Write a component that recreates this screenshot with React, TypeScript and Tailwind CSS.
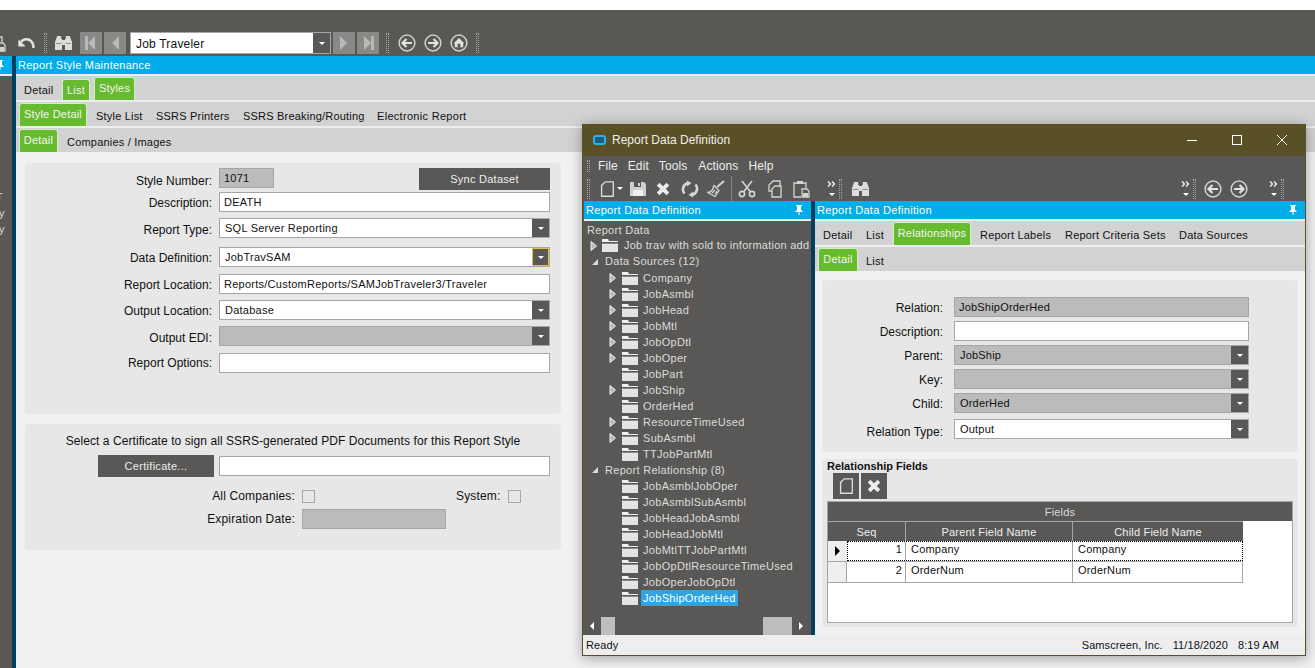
import type { ReactNode } from 'react';

function Tab({ label, active, className = '' }: { label: string; active?: boolean; className?: string }) {
  if (active) {
    return (
      <div className={`flex items-start justify-center whitespace-nowrap rounded-t-[3px] border border-b-0 border-[#d5edc3] bg-[#66bb2f] pt-[2px] text-[#f4f4f4] ${className}`}>
        {label}
      </div>
    );
  }
  return <div className={`whitespace-nowrap pb-[2px] text-[#111] ${className}`}>{label}</div>;
}

function Caret({ className = '' }: { className?: string }) {
  return <div className={`h-0 w-0 border-x-[3px] border-t-[3px] border-x-transparent border-t-white ${className}`} />;
}

function Grip({ className = '' }: { className?: string }) {
  return <div className={`w-[3px] border-x border-dotted border-[#a9a8a6] ${className}`} />;
}

function Chevrons({ className = '' }: { className?: string }) {
  return (
    <div className={`flex w-[9px] flex-col items-center ${className}`}>
      <svg width="9" height="6" viewBox="0 0 9 6" fill="none" stroke="#fff" strokeWidth="1.2">
        <path d="M1 0.5 3.5 3 1 5.5M5 0.5 7.5 3 5 5.5" />
      </svg>
      <Caret className="mt-[6px]" />
    </div>
  );
}

function NavTile({ dir, last }: { dir: 'left' | 'right'; last?: boolean }) {
  return (
    <div className="flex h-[22px] w-[22px] items-center justify-center bg-[#8a8987]">
      <svg width="16" height="16" viewBox="0 0 16 16" fill="#b9b8b6">
        {dir === 'left' ? <path d="M12 1v14L5 8z" /> : <path d="M4 1v14L11 8z" />}
        {last && dir === 'left' && <rect x="2" y="1" width="3" height="14" />}
        {last && dir === 'right' && <rect x="11" y="1" width="3" height="14" />}
      </svg>
    </div>
  );
}

function CircleArrow({ dir }: { dir: 'left' | 'right' }) {
  return (
    <svg width="18" height="18" viewBox="0 0 18 18" fill="none" stroke="#d0d0ce" strokeWidth="1.5">
      <circle cx="9" cy="9" r="7.9" />
      {dir === 'left' ? (
        <path d="M14 9H5M8.5 5 4.5 9l4 4" strokeWidth="2.2" stroke="#e2e2e0" />
      ) : (
        <path d="M4 9h9M9.5 5l4 4-4 4" strokeWidth="2.2" stroke="#e2e2e0" />
      )}
    </svg>
  );
}

function HomeCircle() {
  return (
    <svg width="18" height="18" viewBox="0 0 18 18" fill="none" stroke="#d0d0ce" strokeWidth="1.5">
      <circle cx="9" cy="9" r="7.9" />
      <path d="M3.8 9.2 9 4l5.2 5.2-1 .2v3.8H4.8V9.4z" fill="#e2e2e0" stroke="none" />
      <rect x="7.6" y="9.8" width="2.8" height="3.4" fill="#5a5855" stroke="none" />
    </svg>
  );
}

function Field2Glasses() {
  return (
    <svg width="17" height="16" viewBox="0 0 17 16" fill="#dcdcda">
      <path d="M2.2 1h4v3h.8v11H0V7z" />
      <path d="M14.8 1h-4v3H10v11h7V7z" />
      <rect x="7" y="5" width="3" height="5" />
      <rect x="1" y="8" width="5.5" height="1" fill="#8f8e8c" />
      <rect x="10.5" y="8" width="5.5" height="1" fill="#8f8e8c" />
    </svg>
  );
}

function UndoArrow() {
  return (
    <svg width="17" height="14" viewBox="0 0 17 14" fill="none" stroke="#e4e4e2" strokeWidth="2.4">
      <path d="M3 6.2C5 2.6 12.4 1 15.4 9" />
      <path d="M0.4 3.4 7.6 10.4H0.4z" fill="#e4e4e2" stroke="none" />
      <path d="M15.4 9v3" />
    </svg>
  );
}

function Folder() {
  return (
    <svg width="16" height="13" viewBox="0 0 16 13" className="shrink-0">
      <path d="M0 0h6l1 2h9v1H0z" fill="#f1f1f0" />
      <rect x="0" y="4" width="16" height="9" fill="#e4e4e2" />
      <rect x="0" y="4" width="16" height="1" fill="#8a8987" />
    </svg>
  );
}

function NewDoc({ size = 20 }: { size?: number }) {
  return (
    <svg width={size} height={size} viewBox="0 0 20 20" fill="none" stroke="#dcdcda" strokeWidth="1.5">
      <path d="M8 2h9v16H4V6z" />
    </svg>
  );
}

function BoldX({ size = 18 }: { size?: number }) {
  return (
    <svg width={size} height={size} viewBox="0 0 18 18" fill="none" stroke="#ececea" strokeWidth="4.4">
      <path d="M3.5 3.5 14.5 14.5M14.5 3.5 3.5 14.5" />
    </svg>
  );
}

function Disk() {
  return (
    <svg width="18" height="18" viewBox="0 0 18 18">
      <path d="M1 2h14l2 2v12H1z" fill="#cfcfcd" />
      <rect x="5" y="2" width="7" height="5" fill="#595856" />
      <rect x="9" y="3" width="2" height="3" fill="#cfcfcd" />
      <rect x="4" y="10" width="10" height="6" fill="#efefed" />
    </svg>
  );
}

function Refresh() {
  return (
    <svg width="18" height="18" viewBox="0 0 18 18" fill="none" stroke="#d4d4d2" strokeWidth="2.6">
      <path d="M3.5 13.5A6.5 6.5 0 0 1 7 3" />
      <path d="M14.5 4.5A6.5 6.5 0 0 1 11 15" />
      <path d="M6 0.5 10.5 3 6 6.5z" fill="#d4d4d2" stroke="none" />
      <path d="M12 17.5 7.5 15 12 11.5z" fill="#d4d4d2" stroke="none" />
    </svg>
  );
}

function Broom() {
  return (
    <svg width="18" height="18" viewBox="0 0 18 18" fill="none" stroke="#d4d4d2" strokeWidth="1.3">
      <path d="M17 1 10 7" strokeWidth="2" />
      <path d="M7 5.5l5 5-4 6-7-4c3 0 5-3 6-7z" />
      <path d="M5 13l3-3M8 14l2-3" />
    </svg>
  );
}

function Cut() {
  return (
    <svg width="18" height="18" viewBox="0 0 18 18" fill="none" stroke="#d4d4d2" strokeWidth="1.6">
      <circle cx="4" cy="14" r="2.6" />
      <circle cx="14" cy="14" r="2.6" />
      <path d="M5.5 12 14 1M12.5 12 4 1" />
    </svg>
  );
}

function CopyDocs() {
  return (
    <svg width="18" height="18" viewBox="0 0 18 18" fill="none" stroke="#d4d4d2" strokeWidth="1.3">
      <path d="M7 1h7v10H3V5z" />
      <path d="M9 6h6v11H6v-8z" fill="#595856" />
    </svg>
  );
}

function PasteDoc() {
  return (
    <svg width="18" height="18" viewBox="0 0 18 18" fill="none" stroke="#d4d4d2" strokeWidth="1.3">
      <path d="M5 3H2v14h7" />
      <path d="M11 3h3v5" />
      <rect x="5" y="1" width="6" height="3" fill="#d4d4d2" stroke="none" />
      <path d="M10 9h5l2 2v6h-7z" />
      <path d="M11 13h5v4h-5z" fill="#d4d4d2" stroke="none" />
    </svg>
  );
}

function Pin() {
  return (
    <svg width="8" height="10" viewBox="0 0 8 10" fill="#fff" className="shrink-0">
      <path d="M1 0h6v1H6v4l1.5 1v1H4.5v3h-1V7H.5V6L2 5V1H1z" />
    </svg>
  );
}

function Field({ children, className = '', bg = 'bg-white' }: { children?: ReactNode; className?: string; bg?: string }) {
  return (
    <div className={`flex h-[20px] items-center whitespace-nowrap border border-[#a6a6a6] pl-[4px] text-[#111] ${bg} ${className}`}>
      {children}
    </div>
  );
}

function Combo({ value, bg = 'bg-white', focus, className = '' }: { value?: string; bg?: string; focus?: boolean; className?: string }) {
  return (
    <div className={`flex h-[20px] items-center justify-between border border-[#a6a6a6] pl-[5px] text-[#111] ${bg} ${className}`}>
      <span>{value}</span>
      <div className={`flex h-[18px] w-[17px] items-center justify-center bg-[#595856] ${focus ? 'border border-[#e8c33c]' : ''}`}>
        <Caret />
      </div>
    </div>
  );
}

function Row({ label, mt, wide, labelClass = 'leading-[22px]', children }: { label: string; mt: string; wide?: boolean; labelClass?: string; children: ReactNode }) {
  return (
    <div className={`flex items-center ${mt}`}>
      <div className={`h-[20px] shrink-0 text-right text-[12px] tracking-normal text-[#111] ${wide ? 'w-[121px]' : 'w-[187px]'} ${labelClass}`}>{label}</div>
      <div className={`min-w-0 flex-1 ${wide ? 'ml-[11px]' : 'ml-[7px]'}`}>{children}</div>
    </div>
  );
}

const sources = [
  { name: 'Company', arrow: true },
  { name: 'JobAsmbl', arrow: true },
  { name: 'JobHead', arrow: true },
  { name: 'JobMtl', arrow: true },
  { name: 'JobOpDtl', arrow: true },
  { name: 'JobOper', arrow: true },
  { name: 'JobPart', arrow: false },
  { name: 'JobShip', arrow: true },
  { name: 'OrderHed', arrow: false },
  { name: 'ResourceTimeUsed', arrow: true },
  { name: 'SubAsmbl', arrow: true },
  { name: 'TTJobPartMtl', arrow: false },
];

const relationships = [
  'JobAsmblJobOper',
  'JobAsmblSubAsmbl',
  'JobHeadJobAsmbl',
  'JobHeadJobMtl',
  'JobMtlTTJobPartMtl',
  'JobOpDtlResourceTimeUsed',
  'JobOperJobOpDtl',
  'JobShipOrderHed',
];

function TreeArrow({ open }: { open?: boolean }) {
  if (open) {
    return (
      <svg width="8" height="8" viewBox="0 0 8 8" className="shrink-0">
        <path d="M7 1v6H1z" fill="#d8d8d6" />
      </svg>
    );
  }
  return (
    <svg width="7" height="10" viewBox="0 0 7 10" className="shrink-0">
      <path d="M1 0.5 6.5 5 1 9.5z" fill="#b9b8b6" stroke="#f0f0ee" />
    </svg>
  );
}

function TreeItem({ name, arrow, selected }: { name: string; arrow?: boolean; selected?: boolean }) {
  return (
    <div className="flex h-[16px] items-center pl-[25px]">
      <div className="flex w-[13px] shrink-0">{arrow && <TreeArrow />}</div>
      <Folder />
      <span className={`ml-[3px] px-[2px] leading-[16px] ${selected ? 'bg-[#2fa4e0] text-white' : ''}`}>{name}</span>
    </div>
  );
}

function DataWindow() {
  return (
    <div className="absolute left-[582px] top-[124px] flex h-[532px] w-[724px] flex-col border border-[#5a5025] bg-[#595856] shadow-[0_2px_12px_rgba(0,0,0,0.35)]">
      {/* Title */}
      <div className="flex h-[31px] shrink-0 items-center bg-[#5a5025] pb-[1px] pl-[10px] text-[12px] text-[#eee]">
        <div className="h-[10px] w-[13px] rounded-[3px] border-2 border-[#2bb2ea] bg-[#1a5e7c]" />
        <span className="ml-[6px]">Report Data Definition</span>
        <div className="ml-auto flex items-center gap-[35px] pr-[18px]">
          <svg width="10" height="10" viewBox="0 0 10 10" stroke="#fff" fill="none"><path d="M0 5.5h10" /></svg>
          <svg width="10" height="10" viewBox="0 0 10 10" stroke="#fff" fill="none"><rect x="0.5" y="0.5" width="9" height="9" /></svg>
          <svg width="10" height="10" viewBox="0 0 10 10" stroke="#fff" fill="none"><path d="M0 0l10 10M10 0 0 10" /></svg>
        </div>
      </div>
      {/* Menu */}
      <div className="flex h-[20px] shrink-0 items-center pl-[4px] text-[12px] tracking-[0.1px] text-[#eee]">
        <Grip className="h-[12px]" />
        <span className="ml-[8px]">File</span>
        <span className="ml-[10px]">Edit</span>
        <span className="ml-[10px]">Tools</span>
        <span className="ml-[11px]">Actions</span>
        <span className="ml-[10px]">Help</span>
      </div>
      {/* Toolbar */}
      <div className="flex h-[25px] shrink-0 items-center pl-[4px]">
        <Grip className="h-[20px]" />
        <div className="ml-[8px]"><NewDoc size={18} /></div>
        <Caret className="ml-[1px]" />
        <div className="ml-[6px]"><Disk /></div>
        <div className="ml-[8px]"><BoldX size={16} /></div>
        <div className="ml-[10px]"><Refresh /></div>
        <div className="ml-[8px]"><Broom /></div>
        <div className="ml-[6px] h-[25px] w-px bg-[#8a8987]" />
        <div className="ml-[6px]"><Cut /></div>
        <div className="ml-[10px]"><CopyDocs /></div>
        <div className="ml-[8px]"><PasteDoc /></div>
        <Chevrons className="ml-[17px]" />
        <Grip className="ml-[3px] h-[20px]" />
        <div className="ml-[10px]"><Field2Glasses /></div>
        <div className="ml-auto flex items-center pr-[21px]">
          <Chevrons />
          <Grip className="ml-[3px] h-[20px]" />
          <div className="ml-[8px]"><CircleArrow dir="left" /></div>
          <div className="ml-[8px]"><CircleArrow dir="right" /></div>
          <Chevrons className="ml-[21px]" />
          <Grip className="ml-[3px] h-[20px]" />
        </div>
      </div>
      {/* Panes */}
      <div className="flex min-h-0 flex-1 pl-px">
        <div className="flex w-[227px] shrink-0 flex-col text-[11px] tracking-[0.3px] text-[#dcdcda]">
          <div className="flex h-[18px] shrink-0 items-center justify-between bg-[#03ade9] pl-[2px] pr-[8px] text-white">
            <span>Report Data Definition</span>
            <Pin />
          </div>
          <div className="h-[2px] shrink-0 bg-[#eee]" />
          <div className="min-h-0 flex-1 pt-[1px]">
            <div className="h-[16px] pl-[3px] leading-[16px]">Report Data</div>
            <div className="flex h-[15px] items-center pl-[6px]">
              <div className="w-[12px] shrink-0"><TreeArrow /></div>
              <Folder />
              <span className="ml-[6px] whitespace-nowrap tracking-[0.25px]">Job trav with sold to information add</span>
            </div>
            <div className="flex h-[17px] items-center pl-[7px]">
              <div className="w-[14px] shrink-0"><TreeArrow open /></div>
              <span>Data Sources (12)</span>
            </div>
            {sources.map((s) => (
              <TreeItem key={s.name} name={s.name} arrow={s.arrow} />
            ))}
            <div className="flex h-[16px] items-center pl-[7px]">
              <div className="w-[14px] shrink-0"><TreeArrow open /></div>
              <span>Report Relationship (8)</span>
            </div>
            {relationships.map((r) => (
              <TreeItem key={r} name={r} selected={r === 'JobShipOrderHed'} />
            ))}
          </div>
          <div className="flex h-[18px] shrink-0 items-center">
            <div className="ml-[6px] h-0 w-0 border-y-[4px] border-r-[4px] border-y-transparent border-r-white" />
            <div className="ml-[7px] h-[18px] w-[14px] bg-[#bdbdbd]" />
            <div className="ml-[148px] h-[18px] w-[29px] bg-[#bdbdbd]" />
            <div className="ml-[7px] h-0 w-0 border-y-[4px] border-l-[4px] border-y-transparent border-l-white" />
          </div>
        </div>
        <div className="w-[4px] shrink-0 bg-[#003f5f]" />
        <div className="flex min-w-0 flex-1 flex-col bg-[#f1f1f3] text-[11px] tracking-[0.2px]">
          <div className="flex h-[18px] shrink-0 items-center justify-between bg-[#03ade9] pl-[2px] pr-[8px] tracking-[0.3px] text-white">
            <span>Report Data Definition</span>
            <Pin />
          </div>
          <div className="h-[2px] shrink-0 bg-[#eee]" />
          <div className="flex h-[24px] shrink-0 items-end bg-[#d2d2d2] pl-[8px]">
            <Tab label="Detail" className="w-[30px]" />
            <Tab label="List" className="ml-[13px] w-[19px]" />
            <Tab label="Relationships" active className="ml-[8px] h-[23px] w-[78px]" />
            <Tab label="Report Labels" className="ml-[9px] w-[71px]" />
            <Tab label="Report Criteria Sets" className="ml-[14px] w-[100px]" />
            <Tab label="Data Sources" className="ml-[14px]" />
          </div>
          <div className="h-[2px] shrink-0 bg-[#eee]" />
          <div className="flex h-[24px] shrink-0 items-end bg-[#d2d2d2] pl-[3px]">
            <Tab label="Detail" active className="h-[23px] w-[40px]" />
            <Tab label="List" className="ml-[8px]" />
          </div>
          <div className="flex min-h-0 flex-1 flex-col px-[7px] pt-[9px]">
            <div className="h-[172px] shrink-0 rounded-[4px] bg-[#e7e7e7] pr-[49px] pt-[17px]">
              <Row label="Relation:" wide mt="">
                <Field bg="bg-[#bbbbbb]">JobShipOrderHed</Field>
              </Row>
              <Row label="Description:" wide mt="mt-[4px]">
                <Field />
              </Row>
              <Row label="Parent:" wide mt="mt-[4px]">
                <Combo value="JobShip" bg="bg-[#bbbbbb]" />
              </Row>
              <Row label="Key:" wide mt="mt-[4px]">
                <Combo bg="bg-[#bbbbbb]" />
              </Row>
              <Row label="Child:" wide mt="mt-[4px]">
                <Combo value="OrderHed" bg="bg-[#bbbbbb]" />
              </Row>
              <Row label="Relation Type:" wide mt="mt-[6px]" labelClass="leading-[26px]">
                <Combo value="Output" />
              </Row>
            </div>
            <div className="mt-[7px] h-[168px] shrink-0 rounded-[4px] bg-[#e7e7e7] px-[5px] pt-[1px]">
              <div className="text-[11px] font-bold leading-[13px] tracking-normal text-[#111]">Relationship Fields</div>
              <div className="ml-[6px] flex gap-[2px]">
                <div className="flex h-[26px] w-[26px] items-center justify-center bg-[#595856]"><NewDoc size={18} /></div>
                <div className="flex h-[26px] w-[26px] items-center justify-center bg-[#595856]"><BoldX size={16} /></div>
              </div>
              <div className="mt-[2px] h-[122px] border border-[#a6a6a6] bg-white leading-[14px] text-[#111]">
                <div className="flex h-[19px] items-center justify-center bg-[#595856] text-[#d8d8d6]">Fields</div>
                <div className="flex h-[20px] w-[415px] border-t border-[#a6a6a6] bg-[#595856] text-[#eee]">
                  <div className="flex w-[78px] items-center justify-center border-r border-[#a6a6a6]">Seq</div>
                  <div className="flex w-[167px] items-center justify-center border-r border-[#a6a6a6]">Parent Field Name</div>
                  <div className="flex flex-1 items-center justify-center">Child Field Name</div>
                </div>
                <div className="flex h-[21px] w-[415px] border-b border-[#a6a6a6]">
                  <div className="flex w-[19px] items-center justify-center bg-[#eeeeee]">
                    <div className="h-0 w-0 border-y-[5px] border-l-[5px] border-y-transparent border-l-black" />
                  </div>
                  <div className="flex flex-1 border border-dotted border-black">
                    <div className="flex w-[58px] justify-end border-r border-[#a6a6a6] pr-[3px]">1</div>
                    <div className="w-[167px] border-r border-[#a6a6a6] pl-[5px]">Company</div>
                    <div className="flex-1 pl-[5px]">Company</div>
                  </div>
                </div>
                <div className="flex h-[21px] w-[415px] border-b border-r border-[#a6a6a6]">
                  <div className="w-[19px] border-r border-[#a6a6a6] bg-[#eeeeee]" />
                  <div className="flex w-[59px] justify-end border-r border-[#a6a6a6] pr-[3px] pt-[1px]">2</div>
                  <div className="w-[167px] border-r border-[#a6a6a6] pl-[5px] pt-[1px]">OrderNum</div>
                  <div className="flex-1 pl-[5px] pt-[1px]">OrderNum</div>
                </div>
              </div>
            </div>
          </div>
        </div>
      </div>
      {/* Status */}
      <div className="flex h-[20px] shrink-0 items-center justify-between bg-[#eeeeee] pl-[3px] pr-[26px] pt-[1px] text-[11px] tracking-[0.1px] text-[#111]">
        <span>Ready</span>
        <div className="flex gap-[10px]">
          <span>Samscreen, Inc.</span>
          <span>11/18/2020</span>
          <span>8:19 AM</span>
        </div>
      </div>
    </div>
  );
}

export default function App() {
  return (
    <div className="relative h-[668px] w-[1315px] overflow-hidden bg-white font-['Liberation_Sans',sans-serif]">
      <div className="h-[10px]" />
      {/* Main toolbar */}
      <div className="flex h-[46px] items-end bg-[#5a5855] pb-[2px]">
        <div className="flex h-[22px] w-full items-center">
          <div className="-ml-[12px] w-[18px]"><PasteDoc /></div>
          <div className="ml-[12px]"><UndoArrow /></div>
          <Grip className="ml-[9px] h-[20px]" />
          <div className="ml-[8px]"><Field2Glasses /></div>
          <div className="ml-[8px] flex gap-[2px]">
            <NavTile dir="left" last />
            <NavTile dir="left" />
          </div>
          <div className="ml-[4px] flex h-[22px] w-[201px] items-center justify-between border border-[#a6a6a6] bg-white pl-[5px] text-[12px] tracking-[0.2px] text-[#111]">
            <span className="pt-px">Job Traveler</span>
            <div className="flex h-[20px] w-[17px] items-center justify-center bg-[#595856]"><Caret /></div>
          </div>
          <div className="ml-[2px] flex gap-[2px]">
            <NavTile dir="right" />
            <NavTile dir="right" last />
          </div>
          <Grip className="ml-[7px] h-[20px]" />
          <div className="ml-[9px]"><CircleArrow dir="left" /></div>
          <div className="ml-[8px]"><CircleArrow dir="right" /></div>
          <div className="ml-[8px]"><HomeCircle /></div>
          <Grip className="ml-[8px] h-[20px]" />
        </div>
      </div>
      {/* Body */}
      <div className="flex h-[612px]">
        <div className="w-[12px] shrink-0 overflow-hidden bg-[#5a5855] text-[11px] text-[#dcdcda]">
          <div className="flex h-[18px] items-center bg-[#03ade9] pl-0">
            <div className="-ml-[4px]"><Pin /></div>
          </div>
          <div className="h-[2px] bg-[#eee]" />
          <div className="mt-[113px] w-[5px] leading-[16px]">
            <div className="-ml-[4px]">T</div>
            <div className="-ml-[1px]">y</div>
            <div className="-ml-[1px]">y</div>
          </div>
        </div>
        <div className="w-[4px] shrink-0 bg-[#003f5f]" />
        <div className="flex min-w-0 flex-1 flex-col bg-[#f1f1f3] text-[11px] tracking-[0.2px]">
          <div className="flex h-[18px] shrink-0 items-center bg-[#03ade9] pl-[2px] tracking-[0.25px] text-white">Report Style Maintenance</div>
          <div className="h-[2px] shrink-0 bg-[#eee]" />
          <div className="flex h-[24px] shrink-0 items-end bg-[#d2d2d2] pl-[8px]">
            <Tab label="Detail" className="w-[30px]" />
            <Tab label="List" active className="ml-[8px] h-[21px] w-[28px]" />
            <Tab label="Styles" active className="ml-[4px] h-[23px] w-[41px]" />
          </div>
          <div className="h-[2px] shrink-0 bg-[#eee]" />
          <div className="flex h-[24px] shrink-0 items-end bg-[#d2d2d2] pl-[3px]">
            <Tab label="Style Detail" active className="h-[23px] w-[68px]" />
            <Tab label="Style List" className="ml-[9px] w-[47px]" />
            <Tab label="SSRS Printers" className="ml-[13px] w-[71px]" />
            <Tab label="SSRS Breaking/Routing" className="ml-[16px] w-[121px]" />
            <Tab label="Electronic Report" className="ml-[13px] tracking-[0.3px]" />
          </div>
          <div className="h-[2px] shrink-0 bg-[#eee]" />
          <div className="flex h-[24px] shrink-0 items-end bg-[#d2d2d2] pl-[3px]">
            <Tab label="Detail" active className="h-[23px] w-[39px]" />
            <Tab label="Companies / Images" className="ml-[9px]" />
          </div>
          <div className="w-[545px] pl-[9px] pt-[11px]">
            <div className="h-[251px] rounded-[4px] bg-[#e7e7e7] pr-[11px] pt-[5px] tracking-[0.25px]">
              <Row label="Style Number:" mt="" labelClass="leading-[24px]">
                <div className="flex items-start justify-between">
                  <Field bg="bg-[#bbbbbb]" className="w-[55px]">1071</Field>
                  <div className="flex h-[22px] w-[131px] items-center justify-center bg-[#595856] text-[#eee]">Sync Dataset</div>
                </div>
              </Row>
              <Row label="Description:" mt="mt-[2px]">
                <Field>DEATH</Field>
              </Row>
              <Row label="Report Type:" mt="mt-[6px]" labelClass="leading-[24px]">
                <Combo value="SQL Server Reporting" />
              </Row>
              <Row label="Data Definition:" mt="mt-[9px]">
                <Combo value="JobTravSAM" focus />
              </Row>
              <Row label="Report Location:" mt="mt-[7px]">
                <Field>Reports/CustomReports/SAMJobTraveler3/Traveler</Field>
              </Row>
              <Row label="Output Location:" mt="mt-[6px]">
                <Combo value="Database" />
              </Row>
              <Row label="Output EDI:" mt="mt-[6px]" labelClass="leading-[24px]">
                <Combo bg="bg-[#bbbbbb]" />
              </Row>
              <Row label="Report Options:" mt="mt-[7px]" labelClass="leading-[20px]">
                <Field />
              </Row>
            </div>
            <div className="mt-[10px] h-[126px] rounded-[4px] bg-[#e7e7e7] pt-[8px] text-[12px] tracking-[0.15px] text-[#111]">
              <div className="text-center tracking-[0.07px]">Select a Certificate to sign all SSRS-generated PDF Documents for this Report Style</div>
              <div className="mt-[5px] flex pl-[73px] text-[11px] tracking-[0.3px]">
                <div className="flex h-[22px] w-[116px] items-center justify-center bg-[#595856] text-[#eee]">Certificate...</div>
                <div className="ml-[5px] mt-[1px] h-[20px] w-[331px] border border-[#a6a6a6] bg-white" />
              </div>
              <div className="mt-[10px] flex items-center">
                <div className="w-[270px] text-right">All Companies:</div>
                <div className="ml-[7px] h-[13px] w-[13px] border border-[#a6a6a6] bg-[#e7e7e7]" />
                <div className="ml-[141px] w-[43px] whitespace-nowrap text-right">System:</div>
                <div className="ml-[9px] h-[13px] w-[13px] border border-[#a6a6a6] bg-[#e7e7e7]" />
              </div>
              <div className="mt-[4px] flex items-center">
                <div className="w-[270px] text-right">Expiration Date:</div>
                <div className="ml-[7px] h-[20px] w-[144px] border border-[#a6a6a6] bg-[#bbbbbb]" />
              </div>
            </div>
          </div>
        </div>
      </div>
      <DataWindow />
    </div>
  );
}
